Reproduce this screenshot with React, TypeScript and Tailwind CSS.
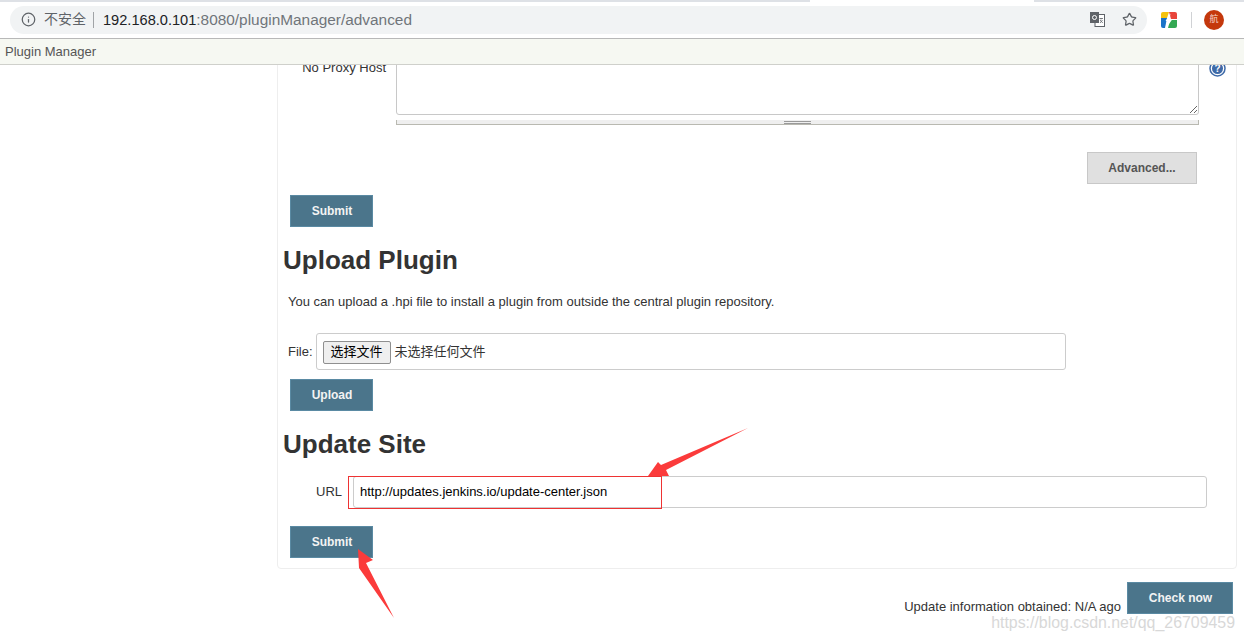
import { Info, Star } from "lucide-react";

const cjk = "font-['Liberation_Sans','Noto_Sans_CJK_SC',sans-serif]";

function PrimaryButton({ label, className = "" }: { label: string; className?: string }) {
  return (
    <button
      className={`block h-[32px] w-[83px] border border-[#5a8aa3] bg-[#4b758b] pl-[1px] text-[12px] font-bold text-[#f3f3f3] ${className}`}
    >
      {label}
    </button>
  );
}

function TranslateIcon() {
  return (
    <svg width="15" height="15" viewBox="0 0 15 15" className="block">
      <rect x="5" y="2.5" width="9.5" height="12" fill="#fff" stroke="#5f6368" strokeWidth="1" />
      <rect x="0" y="0" width="9" height="11" fill="#5f6368" />
      <circle cx="4.5" cy="5.5" r="2" fill="none" stroke="#fff" strokeWidth="1" />
      <path d="M9.5 6.5h3.5M11 6v1.5M10 11l2.5-3M10 8l2.8 3" stroke="#5f6368" strokeWidth="0.8" fill="none" />
    </svg>
  );
}

function AppLogo() {
  return (
    <svg width="16" height="16" viewBox="0 0 16 16" className="block">
      <path d="M2 0h6L6 6H0V2a2 2 0 0 1 2-2z" fill="#f4c20d" />
      <path d="M8 0h6a2 2 0 0 1 2 2v5h-6z" fill="#e8453c" />
      <path d="M0 6h6l-2 10H2a2 2 0 0 1-2-2z" fill="#1a73c8" />
      <path d="M9 8h7v6a2 2 0 0 1-2 2H7z" fill="#34a853" />
      <path d="M9.5 1.5 4.5 9h3l-1.2 5.5L11.5 7h-3z" fill="#fff" />
    </svg>
  );
}

export default function App() {
  return (
    <div className="relative flex h-[641px] w-[1244px] flex-col overflow-hidden bg-white font-['Liberation_Sans',sans-serif] text-[13px] text-[#333]">
      {/* browser chrome */}
      <div className="flex h-[2px] shrink-0 bg-[#dee1e6]">
        <div className="ml-[810px] w-[224px] bg-white" />
      </div>
      <div className="flex h-[37px] shrink-0 items-center border-b border-[#b8b8b8] bg-white pb-[1px]">
        <div className="ml-[10px] flex h-[28px] w-[1137px] items-center rounded-full bg-[#f1f3f4]">
          <Info size={15} strokeWidth={2} className="ml-[11px] text-[#5f6368]" />
          <span className={`ml-[8px] text-[14px] text-[#5f6368] ${cjk}`}>不安全</span>
          <span className="ml-[7px] h-[16px] w-px bg-[#a0a3a6]" />
          <span className="ml-[9px] text-[14.6px] text-[#202124]">
            192.168.0.101<span className="text-[15.4px] text-[#70757a]">:8080/pluginManager/advanced</span>
          </span>
          <span className="ml-auto">
            <TranslateIcon />
          </span>
          <Star size={15} strokeWidth={2} className="ml-[17px] mr-[10px] text-[#5f6368]" />
        </div>
        <div className="ml-[14px]">
          <AppLogo />
        </div>
        <span className="ml-[14px] h-[16px] w-px bg-[#d0d2d5]" />
        <div
          className={`ml-[12px] flex h-[20px] w-[20px] items-center justify-center rounded-full bg-[#c4380c] text-[9px] text-[#f5d5c8] ${cjk}`}
        >
          航
        </div>
      </div>

      {/* breadcrumb bar */}
      <div className="flex h-[26px] shrink-0 items-center border-b border-[#cfd0cb] bg-[#f6f8f2] pl-[5px] text-[13px] text-[#555]">
        Plugin Manager
      </div>

      {/* page */}
      <div className="relative min-h-0 flex-1 overflow-hidden">
        <div className="ml-[277px] -mt-[61px] h-[565px] w-[960px] rounded-[4px] border border-[#eeeeee]">
          {/* proxy row */}
          <div className="flex">
            <div className="w-[108px] pt-[53px] text-right text-[13px] text-[#333]">No Proxy Host</div>
            <div className="ml-[10px] w-[803px]">
              <textarea
                readOnly
                className="block h-[110px] w-full resize-y rounded-[3px] border border-[#c8c8c8] bg-white"
              />
              <div className="mt-[5px] flex h-[5px] items-center justify-center border-b border-r border-l border-[#b9b9b1] bg-[#efefef]">
                <div className="h-[3px] w-[27px] border-y border-[#9a9a9a]" />
              </div>
            </div>
            <svg width="17" height="17" viewBox="0 0 17 17" className="ml-[10px] mt-[55px] block">
              <circle cx="8.5" cy="8.5" r="7.5" fill="#fff" stroke="#3e6aa8" strokeWidth="1.5" />
              <circle cx="8.5" cy="8.5" r="5.5" fill="#3e6aa8" />
              <text x="8.5" y="12" textAnchor="middle" fontSize="10" fontWeight="bold" fill="#fff" fontFamily="Liberation Sans">?</text>
            </svg>
          </div>

          <div className="mt-[27px] flex justify-end pr-[39px]">
            <button className="h-[32px] w-[110px] border border-[#c8c8c8] bg-[#e0e0e0] text-[12px] font-bold text-[#555]">
              Advanced...
            </button>
          </div>

          <PrimaryButton label="Submit" className="ml-[12px] mt-[11px]" />

          <h2 className="ml-[5px] mt-[16px] text-[26px] font-bold leading-[34px] text-[#333]">Upload Plugin</h2>

          <p className="ml-[10px] mt-[17px] text-[13px] leading-[16px] text-[#333]">
            You can upload a .hpi file to install a plugin from outside the central plugin repository.
          </p>

          <div className="ml-[10px] mt-[23px] flex items-center">
            <span className="pt-[1px] text-[13px] text-[#333]">File:</span>
            <div className={`ml-[3px] flex h-[37px] w-[750px] items-center rounded-[3px] border border-[#cccccc] bg-white pl-[6px] pt-[1px] text-[13px] text-[#333] ${cjk}`}>
              <button className="h-[23px] w-[68px] rounded-[2px] border border-[#8f8f8f] bg-[#efefef] text-[13px] text-black">
                选择文件
              </button>
              <span className="ml-[4px]">未选择任何文件</span>
            </div>
          </div>

          <PrimaryButton label="Upload" className="ml-[12px] mt-[9px]" />

          <h2 className="ml-[5px] mt-[16px] text-[26px] font-bold leading-[34px] text-[#333]">Update Site</h2>

          <div className="mt-[15px] flex items-center">
            <span className="ml-[38px] w-[26px] text-[13px] text-[#333]">URL</span>
            <input
              readOnly
              defaultValue="http://updates.jenkins.io/update-center.json"
              className="ml-[11px] h-[32px] w-[854px] rounded-[3px] border border-[#cccccc] bg-white pb-[2px] pl-[6px] text-[13px] text-black outline-none"
            />
          </div>

          <PrimaryButton label="Submit" className="ml-[12px] mt-[18px]" />
        </div>

        {/* footer */}
        <div className="mt-[13px] flex justify-end pr-[11px]">
          <span className="mt-[15px] text-[13px] text-[#333]">Update information obtained: N/A ago</span>
          <PrimaryButton label="Check now" className="ml-[6px] w-[106px]" />
        </div>
      </div>

      {/* annotations drawn over the screenshot */}
      <svg width="1244" height="641" viewBox="0 0 1244 641" className="pointer-events-none absolute left-0 top-0">
        <rect x="348.5" y="476.5" width="313" height="32" fill="none" stroke="#ee3333" strokeWidth="1" />
        <polygon points="648,476 658,462 661,465 748,428 666,470 669,476" fill="#fb3b3b" />
        <polygon points="358,549 373,560 366,563 394,618 359,568" fill="#fb3b3b" />
      </svg>

      {/* watermark */}
      <span className="absolute bottom-[6px] right-[9px] text-[15.9px] text-[#d8d8d8]">https://blog.csdn.net/qq_26709459</span>
    </div>
  );
}
